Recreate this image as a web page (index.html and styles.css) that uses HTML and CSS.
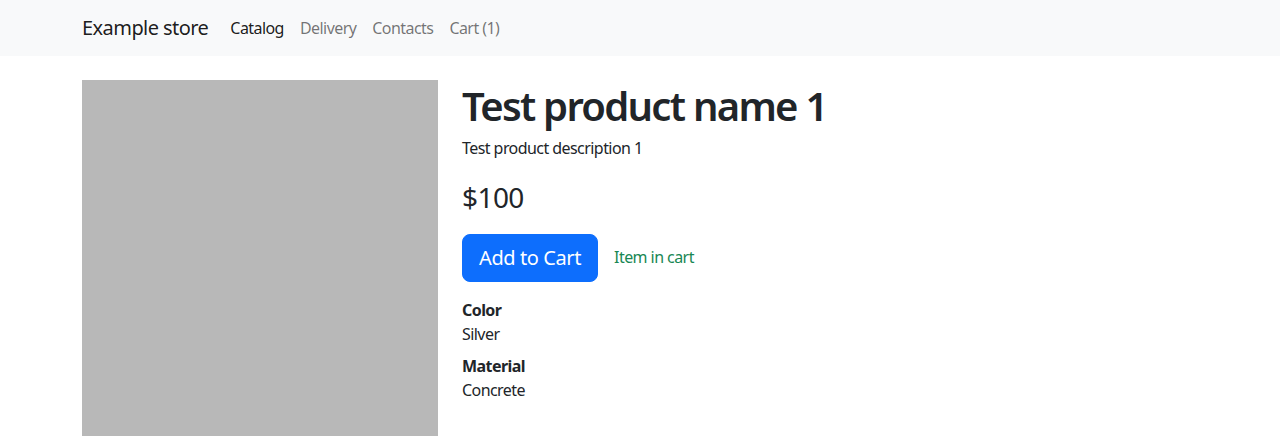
FILE: index.html
```html
<!DOCTYPE html>
<html lang="en">
<head>
<meta charset="utf-8">
<title>Example store</title>
<link rel="stylesheet" href="styles.css">
</head>
<body>
<nav class="navbar">
  <div class="container navbar-inner">
    <a class="brand" href="#">Example store</a>
    <ul class="nav">
      <li><a class="nav-link active" href="#">Catalog</a></li>
      <li><a class="nav-link" href="#">Delivery</a></li>
      <li><a class="nav-link" href="#">Contacts</a></li>
      <li><a class="nav-link" href="#">Cart (1)</a></li>
    </ul>
  </div>
</nav>
<main class="container main">
  <div class="row">
    <div class="col-image">
      <div class="image-placeholder"></div>
    </div>
    <div class="col-info">
      <h1 class="title">Test product name 1</h1>
      <p class="description">Test product description 1</p>
      <p class="price">$100</p>
      <div class="actions">
        <button class="btn-primary" type="button">Add to Cart</button>
        <span class="in-cart">Item in cart</span>
      </div>
      <dl class="props">
        <dt>Color</dt>
        <dd>Silver</dd>
        <dt>Material</dt>
        <dd>Concrete</dd>
      </dl>
    </div>
  </div>
</main>
</body>
</html>
```

FILE: styles.css
```css
* { box-sizing: border-box; }
html, body { margin: 0; padding: 0; }
body {
  font-family: "Noto Sans", "Open Sans", sans-serif;
  font-size: 16px;
  line-height: 1.5;
  letter-spacing: -0.035em;
  color: #212529;
  background: #fff;
}
.container {
  width: 1140px;
  margin: 0 auto;
  padding: 0 12px;
}
.navbar {
  background: #f8f9fa;
  padding: 8px 0;
}
.navbar-inner {
  display: flex;
  align-items: center;
}
.brand {
  font-size: 20px;
  line-height: 30px;
  padding: 5px 0;
  margin-right: 14px;
  color: rgba(0,0,0,.9);
  text-decoration: none;
}
.nav {
  display: flex;
  list-style: none;
  margin: 0;
  padding: 0;
}
.nav-link {
  display: block;
  padding: 8px;
  color: rgba(0,0,0,.55);
  text-decoration: none;
}
.nav-link.active { color: rgba(0,0,0,.9); }
.main { margin-top: 24px; }
.row {
  display: flex;
  gap: 24px;
}
.col-image { width: 356px; flex: none; }
.image-placeholder {
  width: 356px;
  height: 356px;
  background: #b8b8b8;
}
.col-info { flex: 1; }
.title {
  margin: 0 0 6px;
  padding-top: 2px;
  font-size: 40px;
  line-height: 48px;
  font-weight: 600;
  letter-spacing: -0.043em;
}
.description { margin: 0 0 16px; }
.price {
  margin: 0 0 16px;
  font-size: 28px;
  line-height: 42px;
  font-weight: 400;
}
.actions {
  display: flex;
  align-items: center;
  gap: 16px;
  margin-bottom: 16px;
}
.btn-primary {
  font-family: inherit;
  font-size: 20px;
  line-height: 30px;
  letter-spacing: -0.02em;
  padding: 8px 16px;
  border: 1px solid #0d6efd;
  border-radius: 8px;
  background: #0d6efd;
  color: #fff;
}
.in-cart { color: #198754; margin-bottom: 3px; }
.props { margin: 0; }
.props dt { font-weight: 700; }
.props dd { margin: 0 0 8px; }
```
